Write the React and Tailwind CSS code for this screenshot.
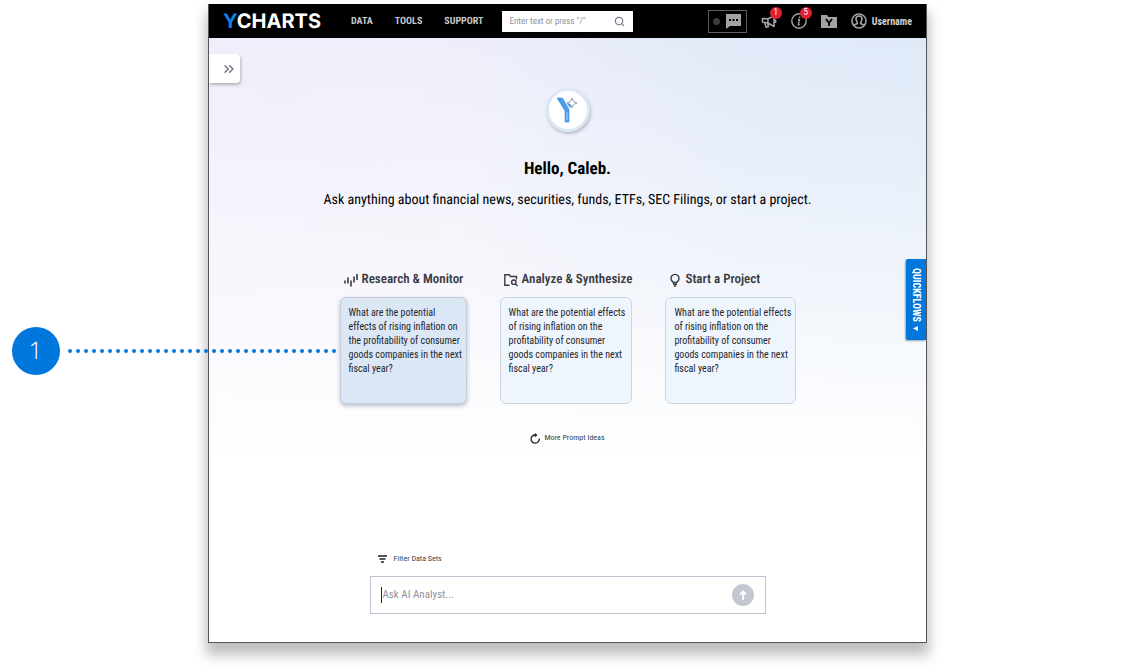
import React, { useState } from "react";
import { ChevronsRight, Search } from "lucide-react";

const prompt =
  "What are the potential effects of rising inflation on the profitability of consumer goods companies in the next fiscal year?";

const columns = [
  { title: "Research & Monitor", icon: BarsIcon, active: true },
  { title: "Analyze & Synthesize", icon: FolderIcon },
  { title: "Start a Project", icon: BulbIcon },
];

export default function App() {
  const [question, setQuestion] = useState("");
  const [search, setSearch] = useState("");

  return (
    <div className="pl-4 pr-[17px] pt-1 pb-7 overflow-hidden bg-white [text-rendering:geometricPrecision] font-['Roboto_Condensed','Liberation_Sans_Narrow',Roboto,sans-serif]">
      <div className="w-full max-w-[719px] mx-auto border border-t-0 border-[#55565a] bg-white shadow-[0_10px_12px_2px_rgba(0,0,0,0.26)]">
        <TopBar search={search} setSearch={setSearch} />

        <main className="relative flex flex-col items-center pt-[50px] pb-7 bg-[linear-gradient(to_bottom,rgba(255,255,255,0)_0%,rgba(255,255,255,0.5)_38%,#fff_70%),linear-gradient(to_right,#f1edfa_0%,#eeeefa_35%,#e1eaf8_75%,#dfe9f8_100%)]">
          <button
            type="button"
            aria-label="Expand sidebar"
            className="absolute left-0 top-4 flex items-center justify-center w-[31px] h-[29px] pl-2 bg-white rounded-r-sm shadow-[1px_2px_3px_rgba(0,0,0,0.25)] text-[#6b6e7b]"
          >
            <ChevronsRight size={16} strokeWidth={2} />
          </button>

          <button
            type="button"
            className="absolute right-0 top-[221px] flex items-center justify-center gap-1 w-5 h-[81px] bg-[#0077dc] rounded-l-xs shadow-[-1px_1px_2px_rgba(0,0,0,0.35)] text-white text-[10px] font-bold [writing-mode:vertical-rl]"
          >
            QUICKFLOWS
            <svg width="6" height="5" viewBox="0 0 6 5" fill="currentColor">
              <path d="M0 2.5 5 0v5z" />
            </svg>
          </button>

          {/* Greeting */}
          <AnalystMark />
          <h1 className="mt-[25px] text-[17px] leading-6 font-bold text-black">Hello, Caleb.</h1>
          <p className="mt-[9px] text-sm leading-5 text-black text-center">
            Ask anything about financial news, securities, funds, ETFs, SEC Filings, or start a project.
          </p>

          {/* Prompt ideas */}
          <div className="grid grid-cols-[128fr_131fr_131fr] gap-x-[33px] w-full max-w-[456px] mt-[60px]">
            {columns.map((col) => (
              <PromptColumn key={col.title} {...col} onPick={() => setQuestion(prompt)} />
            ))}
          </div>
          <button type="button" className="flex items-center gap-1 mt-[27px] text-[8px] leading-[14px] text-[#3b3e48]">
            <svg width="10" height="11" viewBox="0 0 10 11" fill="none" stroke="#222" strokeWidth="1.300">
              <path d="M9.200 5.500A4.100 4.100 0 1 1 5.500 2" />
              <path d="M4.800 0 7.600 2 4.800 4.200z" fill="#222" stroke="none" />
            </svg>
            More Prompt Ideas
          </button>

          {/* Ask box */}
          <form className="w-full max-w-[396px] mt-[107px]" onSubmit={(e) => e.preventDefault()}>
            <button type="button" className="flex items-center gap-[7px] ml-2 text-[8px] leading-[14px] text-[#3b3e48]">
              <svg width="9" height="8" viewBox="0 0 9 8" stroke="#222" strokeWidth="1.400">
                <path d="M0 1h9M1.500 4h6M3 7h3" />
              </svg>
              Filter Data Sets
            </button>
            <div className="flex items-center h-[38px] mt-[10px] pl-[10px] pr-[11px] bg-white border border-[#bfc2d2]">
              <span className="w-px h-4 bg-[#22242c]" />
              <input
                aria-label="Ask AI Analyst"
                placeholder="Ask AI Analyst..."
                value={question}
                onChange={(e) => setQuestion(e.target.value)}
                className="flex-1 min-w-0 pl-px text-[11px] text-[#33363f] placeholder:text-[#8f929e] outline-none"
              />
              <button
                type="submit"
                aria-label="Send"
                className="flex items-center justify-center w-[22px] h-[22px] rounded-full bg-[#c5c7d0] text-white"
              >
                <svg width="8" height="10" viewBox="0 0 8 10" fill="none" stroke="currentColor" strokeWidth="1.800">
                  <path d="M4 10V1.500M1 4.500l3-3 3 3" />
                </svg>
              </button>
            </div>
          </form>
        </main>
      </div>
    </div>
  );
}

function TopBar({ search, setSearch }) {
  return (
    <header className="flex items-center h-[34px] px-[14px] bg-black text-[#c6c7ca]">
      <a href="#" className="w-[104px] text-xl leading-6 font-bold text-white font-['Inter',sans-serif]">
        <span className="text-[#0f82e6]">Y</span>CHARTS
      </a>
      <nav className="flex gap-[22px] ml-6 text-[10px] font-bold">
        <a href="#">DATA</a>
        <a href="#">TOOLS</a>
        <a href="#">SUPPORT</a>
      </nav>
      <div className="flex items-center w-[131px] h-[21px] ml-[18px] px-2 bg-white text-[#777a88]">
        <input
          type="text"
          aria-label="Search"
          placeholder={'Enter text or press "/"'}
          value={search}
          onChange={(e) => setSearch(e.target.value)}
          className="flex-1 min-w-0 h-full text-[9px] placeholder:text-[#8f919e] outline-none"
        />
        <Search size={11} strokeWidth={2.5} />
      </div>

      <div className="flex items-center gap-[14px] ml-auto text-[#a2a3a7]">
        <button type="button" aria-label="Chat" className="flex items-center gap-[5px] h-[23px] px-1 border border-[#5c5d60]">
          <span className="w-[7px] h-[7px] rounded-full bg-[#3d3e40]" />
          <svg width="17" height="15" viewBox="0 0 17 15">
            <path d="M1 0h15v12H5l-4 3z" fill="currentColor" />
            <path d="M4 5h2v2H4zM7.500 5h2v2h-2zM11 5h2v2h-2z" fill="#000" />
          </svg>
        </button>
        <button type="button" aria-label="Announcements" className="relative">
          <svg width="16" height="16" viewBox="0 0 16 16" fill="none" stroke="currentColor" strokeWidth="1.500" strokeLinejoin="round">
            <path d="M1.500 5.500 7 5.800 13 3v10.500L7 9.800l-5.500-.5zM7 5.800v4M3.500 9.500l1.700 4.700 2.300-.7L6.500 10M13 7.200h1.700v2H13" />
          </svg>
          <Badge>1</Badge>
        </button>
        <button type="button" aria-label="Alerts" className="relative">
          <svg width="16" height="16" viewBox="0 0 16 16" fill="none" stroke="currentColor">
            <circle cx="8" cy="8" r="7.200" strokeWidth="1.400" />
            <path d="M7 6.500h1.500L7.300 11.500h1.500M8.600 3.500v1.500" strokeWidth="1.300" />
          </svg>
          <Badge>5</Badge>
        </button>
        <button type="button" aria-label="My files">
          <svg width="16" height="14" viewBox="0 0 16 14">
            <path d="M0 1h6l1.500 2H16v11H0z" fill="currentColor" />
            <path d="M5 5l3 4 3-4M8 8.500V12" stroke="#000" strokeWidth="1.800" fill="none" />
          </svg>
        </button>
        <button type="button" className="flex items-center gap-[5px]">
          <svg width="16" height="16" viewBox="0 0 16 16" fill="none" stroke="currentColor" strokeWidth="1.600">
            <circle cx="8" cy="8" r="7" />
            <path d="M8 3c2 0 3 1.300 3 3 0 1.600-.6 2.600-1.300 3.300v1.200l3.300 1.700M8 3C6 3 5 4.300 5 6c0 1.600.6 2.600 1.300 3.300v1.200L3 12.200" />
          </svg>
          <span className="text-[10px] font-bold text-[#d0d1d3]">Username</span>
        </button>
      </div>
    </header>
  );
}

const Badge = ({ children }) => (
  <span className="absolute -top-[6px] -right-[5px] flex items-center justify-center w-3 h-3 rounded-full bg-[#e01f33] text-[9px] text-white">
    {children}
  </span>
);

const PromptColumn = ({ title, icon: Icon, active, onPick }) => (
  <section className="flex flex-col">
    <h2 className="flex items-center gap-1 h-5 pl-1 text-[13px] font-semibold text-[#3a3c42] whitespace-nowrap">
      <Icon />
      {title}
    </h2>
    <div className="relative mt-[7px]">
      <button
        type="button"
        onClick={onPick}
        className={
          active
            ? "flex items-start w-full h-[107px] pl-2 pr-0.5 pt-2 rounded-md border border-[#c3ccd8] bg-[#dbe7f5] shadow-[0_2px_4px_rgba(40,50,80,0.3)] text-left text-[10px] leading-[14px] text-[#24262c]"
            : "flex items-start w-full h-[107px] pl-2 pr-0.5 pt-2 rounded-md border border-[#cfd5e0] bg-[#eff5fd] text-left text-[10px] leading-[14px] text-[#24262c]"
        }
      >
        {prompt}
      </button>
      {active && <Callout />}
    </div>
  </section>
);

// Numbered marker with a dotted leader that ends at the card
const Callout = () => (
  <div className="absolute right-full top-1/2 -translate-y-1/2 flex items-center gap-2 mr-1 pointer-events-none">
    <span className="flex items-center justify-center w-12 h-12 rounded-full bg-[#0077dc] text-white text-2xl font-light font-['Open_Sans',sans-serif]">
      1
    </span>
    <svg width="268" height="4" viewBox="0 0 268 4">
      <line x1="2" y1="2" x2="267" y2="2" stroke="#0077dc" strokeWidth="4" strokeLinecap="round" strokeDasharray="0 8" />
    </svg>
  </div>
);

const AnalystMark = () => (
  <div className="flex items-center justify-center w-11 h-11 rounded-full border-[3px] border-[#dce8f6] bg-white shadow-[1px_2px_3px_rgba(60,70,90,0.3)]">
    <svg width="24" height="28" viewBox="0 0 24 28" fill="none">
      <path d="M1 2h5.500L13 13.500V26H9V15z" fill="#4a9fea" stroke="#2f86d6" strokeWidth="0.500" />
      <path d="M11 16.500V24" stroke="#a9d2f6" />
      <path d="M10.500 7l5 1.500-1.500 3.500z" fill="#459be8" />
      <path d="M16 2l1.500 3.500L21 7l-3.500 1.500L16 12l-1.500-3.500L11 7l3.500-1.500z" stroke="#8ea3ba" fill="#fff" />
    </svg>
  </div>
);

function BarsIcon() {
  return (
    <svg width="14" height="14" viewBox="0 0 14 14" stroke="currentColor" strokeWidth="1.600">
      <path d="M1 7.500v3M4 4.500v6M7 7.500v6M10 3.500v6M13 1v6" />
    </svg>
  );
}

function FolderIcon() {
  return (
    <svg width="14" height="14" viewBox="0 0 14 14" fill="none" stroke="currentColor" strokeWidth="1.400">
      <path d="M5.500 12.300H.8V1.700h4.400l1.300 1.800h6v3" />
      <circle cx="9.800" cy="9.200" r="2.200" />
      <path d="M11.400 10.800l2.200 2.200" />
    </svg>
  );
}

function BulbIcon() {
  return (
    <svg width="12" height="14" viewBox="0 0 12 14" fill="none" stroke="currentColor" strokeWidth="1.400">
      <path d="M4 9.500V8.800a4 4 0 1 1 4 0v.7zM4 11.300h4M4.800 13h2.400" />
    </svg>
  );
}
